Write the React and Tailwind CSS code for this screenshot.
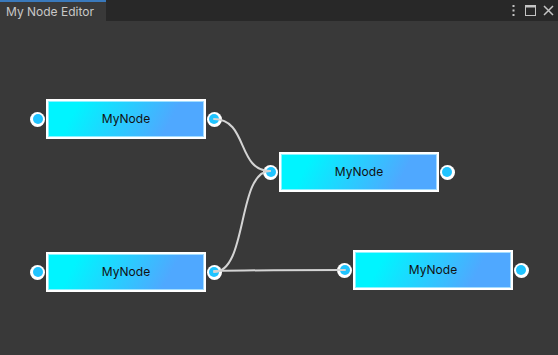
import React from "react";

const nodes = [
  { x: 46, y: 99 },
  { x: 279, y: 152 },
  { x: 46, y: 252 },
  { x: 353, y: 250 },
];

function Port({ cx, cy }) {
  return (
    <div
      className="absolute w-[15px] h-[15px] rounded-full bg-white flex items-center justify-center"
      style={{ left: cx - 7.5, top: cy - 7.5 }}
    >
      <div className="w-[10px] h-[10px] rounded-full bg-[#20c4ff]" />
    </div>
  );
}

export default function App() {
  return (
    <div className="w-[558px] h-[355px] bg-[#393939] flex flex-col font-['Inter','Noto_Sans',sans-serif] overflow-hidden">
      <div className="h-[21px] bg-[#282828] flex items-stretch shrink-0">
        <div className="w-[106px] bg-[#393939] border-t-2 border-[#3a79bb] flex items-center pl-[6px] text-[12px] text-[#c8c8c8] leading-none">
          My Node Editor
        </div>
        <div className="flex-1" />
        <div className="flex items-center gap-[7px] pr-[4px] text-[#c4c4c4]">
          <svg width="3" height="11" viewBox="0 0 3 11">
            <rect x="0.5" y="0" width="2" height="2" fill="#c4c4c4" />
            <rect x="0.5" y="4.5" width="2" height="2" fill="#c4c4c4" />
            <rect x="0.5" y="9" width="2" height="2" fill="#c4c4c4" />
          </svg>
          <svg width="11" height="11" viewBox="0 0 11 11" className="ml-[3px]">
            <rect x="0.5" y="0.5" width="10" height="10" fill="none" stroke="#c4c4c4" strokeWidth="1" />
            <rect x="0.5" y="0.5" width="10" height="2" fill="#c4c4c4" />
          </svg>
          <svg width="11" height="11" viewBox="0 0 11 11">
            <path d="M1 1 L10 10 M10 1 L1 10" stroke="#c4c4c4" strokeWidth="1.5" />
          </svg>
        </div>
      </div>
      <div className="relative flex-1">
        <div className="absolute inset-0 -top-[21px]">
          {nodes.map((n, i) => (
            <React.Fragment key={i}>
              <div
                className="absolute w-[160px] h-[40px] border-2 border-white bg-[linear-gradient(118deg,#00f4ff_18%,#4fa8ff_76%)] flex items-center justify-center text-[12px] text-[#111]"
                style={{ left: n.x, top: n.y }}
              >
                <div className="absolute inset-0 border border-[#c8f4ff]/70" />
                <span className="relative">MyNode</span>
              </div>
              <Port cx={n.x - 8.5} cy={n.y + 20} />
              <Port cx={n.x + 168} cy={n.y + 20} />
            </React.Fragment>
          ))}
          <svg className="absolute left-0 top-0" width="558" height="355">
            <g fill="none" stroke="#d4d4d4" strokeWidth="2" strokeLinecap="round">
              <path d="M214 119 C 248 119, 237 171, 270 171" />
              <path d="M214 272 C 248 272, 237 171, 270 171" />
              <path d="M214 271 C 260 270, 300 270, 345 270" />
            </g>
          </svg>
        </div>
      </div>
    </div>
  );
}
